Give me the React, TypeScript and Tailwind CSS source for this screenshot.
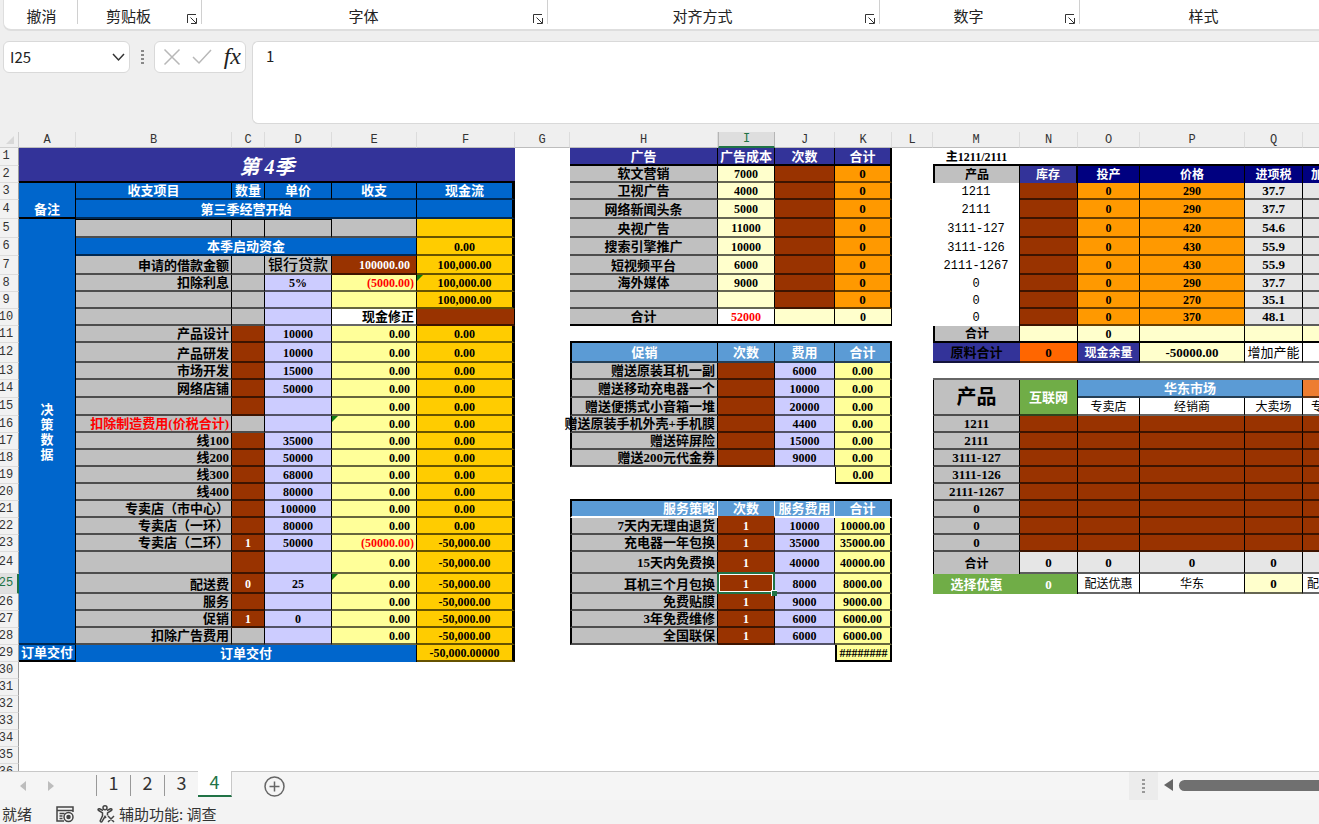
import React, { useState } from "react";

type Cell = {
  text?: string;
  cls: string;
  colSpan?: number;
  rowSpan?: number;
  flag?: boolean;
};

const COLUMNS = [
  { name: "A", width: 57 },
  { name: "B", width: 156 },
  { name: "C", width: 33 },
  { name: "D", width: 67 },
  { name: "E", width: 85 },
  { name: "F", width: 98 },
  { name: "G", width: 55 },
  { name: "H", width: 148 },
  { name: "I", width: 57 },
  { name: "J", width: 60 },
  { name: "K", width: 57 },
  { name: "L", width: 41 },
  { name: "M", width: 87 },
  { name: "N", width: 58 },
  { name: "O", width: 62 },
  { name: "P", width: 105 },
  { name: "Q", width: 58 },
  { name: "R", width: 58 },
];

// every row is 17px high except these
const ROW_HEIGHTS: Record<number, number> = {
  1: 18, 4: 19, 5: 19, 6: 18, 7: 19, 12: 20, 14: 18, 15: 18, 24: 22, 25: 20,
};
const ROW_COUNT = 36;

// borders
const G = "border-b-2 border-r border-b-black/60 border-r-black";
const GT = "border-b-2 border-r border-black";
const THICK_R = "border-b-2 border-r-3 border-b-black/60 border-r-black";
const END_R = "border-b-2 border-r-2 border-b-black/60 border-r-black";
const LEFT = "border-l-2 border-b-2 border-r border-b-black/60 border-x-black";

// text
const CN = "text-[13px] font-bold justify-center";
const CN_R = "text-[13px] font-bold justify-end pr-0.5";
const NUM = "text-[12px] font-bold justify-center";
const NUM_R = "text-[12px] font-bold justify-end pr-1.5";
const KAI = "text-[12px] justify-center";

// fills
const INDIGO = "bg-[#333399] text-white";
const NAVY = "bg-[#000080] text-white";
const BLUE = "bg-[#0066cc] text-white";
const SKY = "bg-[#5b9bd5] text-white";
const GRAY = "bg-[#c0c0c0]";
const LIGHT = "bg-[#e6e6e6]";
const BROWN = "bg-[#993300] text-white";
const LILAC = "bg-[#ccccff]";
const YELLOW = "bg-[#ffff99]";
const CREAM = "bg-[#ffffcc]";
const GOLD = "bg-[#ffcc00]";
const ORANGE = "bg-[#ff9900]";
const GREEN = "bg-[#70ad47] text-white";

const cells: Record<string, Cell> = {};

const put = (ref: string, text: string, cls: string, more: Partial<Cell> = {}) => {
  cells[ref] = { text, cls, ...more };
};

/* ---------- A:F, season cash table ---------- */
put("A1", "第 4季", `${INDIGO} border-b-2 border-black text-[20px] italic font-bold justify-center pt-1`, { colSpan: 6, rowSpan: 2 });
put("A3", "备注", `${BLUE} ${GT} ${CN} align-bottom`, { rowSpan: 2 });
put("B3", "收支项目", `${BLUE} ${G} ${CN}`);
put("C3", "数量", `${BLUE} ${G} ${CN}`);
put("D3", "单价", `${BLUE} ${G} ${CN}`);
put("E3", "收支", `${BLUE} ${G} ${CN}`);
put("F3", "现金流", `${BLUE} ${THICK_R} ${CN}`);
put("B4", "第三季经营开始", `${BLUE} ${G} ${CN} align-bottom`, { colSpan: 4 });
put("F4", "", `${BLUE} ${THICK_R}`);
put("A5", "决策数据", `${BLUE} ${G} ${CN} stack`, { rowSpan: 24 });
["B5", "C5", "D5"].forEach((ref) => put(ref, "", `${GRAY} border-t ${G} border-t-black`));
put("E5", "", `${GRAY} ${G}`);
put("F5", "", `${GOLD} ${THICK_R}`);
put("B6", "本季启动资金", `${BLUE} ${G} ${CN} align-bottom`, { colSpan: 4 });
put("F6", "0.00", `${GOLD} ${THICK_R} ${NUM}`);

type CashRow = [label: string, count: string | null, price: string, amount: string, cash: string];

// count === null means the count cell cannot be filled in
const cashRows: CashRow[] = [
  ["申请的借款金额", null, "银行贷款", "100000.00", "100,000.00"],
  ["扣除利息", null, "5%", "(5000.00)", "100,000.00"],
  ["", null, "", "", "100,000.00"],
  ["", null, "", "现金修正", ""],
  ["产品设计", "", "10000", "0.00", "0.00"],
  ["产品研发", "", "10000", "0.00", "0.00"],
  ["市场开发", "", "15000", "0.00", "0.00"],
  ["网络店铺", "", "50000", "0.00", "0.00"],
  ["", "", "", "0.00", "0.00"],
  ["扣除制造费用(价税合计)", null, "", "0.00", "0.00"],
  ["线100", "", "35000", "0.00", "0.00"],
  ["线200", "", "50000", "0.00", "0.00"],
  ["线300", "", "68000", "0.00", "0.00"],
  ["线400", "", "80000", "0.00", "0.00"],
  ["专卖店（市中心）", "", "100000", "0.00", "0.00"],
  ["专卖店（一环）", "", "80000", "0.00", "0.00"],
  ["专卖店（二环）", "1", "50000", "(50000.00)", "-50,000.00"],
  ["", "", "", "0.00", "-50,000.00"],
  ["配送费", "0", "25", "0.00", "-50,000.00"],
  ["服务", "", "", "0.00", "-50,000.00"],
  ["促销", "1", "0", "0.00", "-50,000.00"],
  ["扣除广告费用", null, "", "0.00", "-50,000.00"],
];

cashRows.forEach(([label, count, price, amount, cash], i) => {
  const r = i + 7;
  const negative = amount.startsWith("(");
  put(`B${r}`, label, `${GRAY} ${G} ${CN_R} align-bottom ${r === 16 ? "text-[#ff0000]" : ""}`);
  put(`C${r}`, count ?? "", `${count === null ? GRAY : BROWN} ${G} ${NUM}`);
  put(`D${r}`, price, `${LILAC} ${G} ${NUM}`);
  put(`E${r}`, amount, `${YELLOW} ${G} ${negative ? "text-[12px] font-bold justify-end pr-0.5 text-[#ff0000]" : NUM_R}`, { flag: r === 16 || r === 25 });
  put(`F${r}`, cash, `${GOLD} ${THICK_R} ${NUM}`, { flag: r === 8 });
});
put("D7", "银行贷款", `${GRAY} ${G} text-[15px] font-medium justify-center`);
put("E7", "100000.00", `${BROWN} ${G} ${NUM_R}`);
put("E10", "现金修正", `bg-white ${G} ${CN_R}`);
put("F10", "", `${BROWN} ${G}`);
put("A29", "订单交付", `${BLUE} ${GT} ${CN}`);
put("B29", "订单交付", `${BLUE} border-r border-black ${CN}`, { colSpan: 4 });
put("F29", "-50,000.00000", `${GOLD} ${THICK_R} ${NUM}`);

/* ---------- H:K, advertising ---------- */
put("H1", "广告", `${INDIGO} ${GT} ${CN}`);
put("I1", "广告成本", `${INDIGO} ${GT} ${CN}`);
put("J1", "次数", `${INDIGO} ${GT} ${CN}`);
put("K1", "合计", `${INDIGO} border-b-2 border-r-2 border-black ${CN}`);

[
  ["软文营销", "7000"],
  ["卫视广告", "4000"],
  ["网络新闻头条", "5000"],
  ["央视广告", "11000"],
  ["搜索引擎推广", "10000"],
  ["短视频平台", "6000"],
  ["海外媒体", "9000"],
  ["", ""],
].forEach(([label, cost], i) => {
  const r = i + 2;
  put(`H${r}`, label, `${GRAY} ${G} ${CN} align-bottom`);
  put(`I${r}`, cost, `${CREAM} ${G} ${NUM}`);
  put(`J${r}`, "", `${BROWN} ${G}`);
  put(`K${r}`, "0", `${ORANGE} ${END_R} text-[13px] font-bold justify-center`);
});
put("H10", "合计", `${GRAY} ${GT} ${CN}`);
put("I10", "52000", `bg-white text-[#ff0000] ${GT} ${NUM}`);
put("J10", "", `${CREAM} ${GT}`);
put("K10", "0", `${CREAM} ${GT} ${NUM}`);

/* ---------- H:K, promotion ---------- */
["H11", "I11", "J11", "K11", "H20", "I20", "J20", "K20"].forEach((ref) => put(ref, "", "border-b-2 border-black"));
put("H12", "促销", `${SKY} ${LEFT} ${CN}`);
put("I12", "次数", `${SKY} ${G} ${CN}`);
put("J12", "费用", `${SKY} ${G} ${CN}`);
put("K12", "合计", `${SKY} ${END_R} ${CN}`);

[
  ["赠送原装耳机一副", "6000"],
  ["赠送移动充电器一个", "10000"],
  ["赠送便携式小音箱一堆", "20000"],
  ["赠送原装手机外壳+手机膜", "4400"],
  ["赠送碎屏险", "15000"],
  ["赠送200元代金券", "9000"],
].forEach(([label, cost], i) => {
  const r = i + 13;
  put(`H${r}`, label, `${GRAY} ${LEFT} ${CN_R} align-bottom`);
  put(`I${r}`, "", `${BROWN} ${G}`);
  put(`J${r}`, cost, `${LILAC} ${G} ${NUM}`);
  put(`K${r}`, "0.00", `${YELLOW} ${END_R} ${NUM}`);
});
put("K19", "0.00", `${YELLOW} border-b-2 border-l border-r-2 border-black ${NUM}`);

/* ---------- H:K, service ---------- */
put("H21", "服务策略", `${SKY} border-l-2 border-l-black border-b-2 border-r border-b-white border-r-white ${CN_R}`);
put("I21", "次数", `${SKY} border-b-2 border-r border-b-[#993300] border-r-white ${CN}`);
put("J21", "服务费用", `${SKY} border-b-2 border-r border-white ${CN}`);
put("K21", "合计", `${SKY} border-b-2 border-r-2 border-b-white border-r-black ${CN}`);

[
  ["7天内无理由退货", "10000"],
  ["充电器一年包换", "35000"],
  ["15天内免费换", "40000"],
  ["耳机三个月包换", "8000"],
  ["免费贴膜", "9000"],
  ["3年免费维修", "6000"],
  ["全国联保", "6000"],
].forEach(([label, cost], i) => {
  const r = i + 22;
  put(`H${r}`, label, `${GRAY} ${LEFT} ${CN_R} ${r === 24 ? "" : "align-bottom"}`);
  put(`I${r}`, "1", `${BROWN} ${G} ${NUM}`);
  put(`J${r}`, cost, `${LILAC} ${G} ${NUM}`);
  put(`K${r}`, `${cost}.00`, `${YELLOW} ${END_R} ${NUM}`);
});
put("K29", "########", `${YELLOW} border-b-2 border-l-2 border-r-2 border-black ${NUM}`);

/* ---------- M:R, production ---------- */
put("M1", "主1211/2111", `border-b-2 border-black ${NUM}`);
["N1", "O1", "P1", "Q1", "R1"].forEach((ref) => put(ref, "", "border-b-2 border-black"));
put("M2", "产品", `${GRAY} border-l-2 border-r border-black ${KAI} font-bold`);
put("N2", "库存", `${INDIGO} border-r-2 border-black ${KAI} font-bold`);
put("O2", "投产", `${NAVY} border-r border-black ${KAI} font-bold`);
put("P2", "价格", `${NAVY} border-r border-black ${KAI} font-bold`);
put("Q2", "进项税", `${NAVY} border-r border-black ${KAI} font-bold`);
put("R2", "加", `${NAVY} text-[12px] font-bold justify-start pl-2`);

[
  ["1211", "290", "37.7"],
  ["2111", "290", "37.7"],
  ["3111-127", "420", "54.6"],
  ["3111-126", "430", "55.9"],
  ["2111-1267", "430", "55.9"],
  ["0", "290", "37.7"],
  ["0", "270", "35.1"],
  ["0", "370", "48.1"],
].forEach(([product, price, tax], i) => {
  const r = i + 3;
  put(`M${r}`, product, "border-r border-black font-['Liberation_Mono',monospace] text-[12px] justify-center");
  put(`N${r}`, "", `${BROWN} ${G}`);
  put(`O${r}`, "0", `${ORANGE} ${G} ${NUM}`);
  put(`P${r}`, price, `${ORANGE} ${G} ${NUM}`);
  put(`Q${r}`, tax, `${LIGHT} ${G} text-[13px] font-bold justify-center`);
  put(`R${r}`, "", `${LIGHT} ${G}`);

  // same products again in the market table below
  const m = i + 16;
  put(`M${m}`, product, `${GRAY} border-l ${G} border-l-black text-[13px] font-bold justify-center`);
  ["N", "O", "P", "Q", "R"].forEach((c) => put(`${c}${m}`, "", `${BROWN} ${G}`));
});
put("M11", "合计", `${GRAY} border-l-2 border-b-2 border-r border-black ${KAI} font-bold`);
["N11", "P11", "Q11", "R11"].forEach((ref) => put(ref, "", `${CREAM} ${GT}`));
put("O11", "0", `${CREAM} ${GT} ${NUM}`);
put("M12", "原料合计", "bg-[#333399] text-black border-b-2 border-b-black/60 text-[13px] font-bold justify-center");
put("N12", "0", `bg-[#ff6600] ${G} text-[13px] font-bold justify-center`);
put("O12", "现金余量", `${INDIGO} ${G} ${KAI} font-bold`);
put("P12", "-50000.00", `${CREAM} ${G} text-[13px] font-bold justify-center`);
put("Q12", "增加产能", `bg-white ${G} text-[13px] justify-center`);
put("R12", "", `bg-white ${G}`);

/* ---------- M:R, market ---------- */
["M13", "N13", "O13", "P13", "Q13", "R13"].forEach((ref) => put(ref, "", "border-b-2 border-b-black/60"));
put("M14", "产品", `${GRAY} border-l ${G} border-l-black text-[20px] font-bold justify-center`, { rowSpan: 2 });
put("N14", "互联网", `${GREEN} ${G} text-[13px] font-bold justify-center`, { rowSpan: 2 });
put("O14", "华东市场", `${SKY} ${G} ${CN}`, { colSpan: 3 });
put("R14", "", "bg-[#ed7d31] border-b-2 border-b-black/60");
put("O15", "专卖店", `bg-white ${G} ${KAI}`);
put("P15", "经销商", `bg-white ${G} ${KAI}`);
put("Q15", "大卖场", `bg-white ${G} ${KAI}`);
put("R15", "专", `bg-white ${G} text-[12px] justify-start pl-2`);
put("M24", "合计", `${GRAY} border-l border-r border-black ${KAI} font-bold`);
["N24", "O24", "P24", "Q24"].forEach((ref) => put(ref, "0", `${LIGHT} ${G} text-[13px] font-bold justify-center`));
put("R24", "", `${LIGHT} ${G}`);
put("M25", "选择优惠", `${GREEN} text-[13px] font-bold justify-center`);
put("N25", "0", `${GREEN} border-r border-black text-[13px] font-bold justify-center`);
put("O25", "配送优惠", `bg-white ${G} ${KAI}`);
put("P25", "华东", `bg-white ${G} ${KAI}`);
put("Q25", "0", `${CREAM} ${G} text-[13px] font-bold justify-center`);
put("R25", "配", `bg-white ${G} text-[12px] justify-start pl-1`);

// cells hidden under a merged one
const covered = new Set<string>();
Object.entries(cells).forEach(([ref, { colSpan = 1, rowSpan = 1 }]) => {
  const col = COLUMNS.findIndex((c) => c.name === ref[0]);
  const row = Number(ref.slice(1));
  for (let r = row; r < row + rowSpan; r++) {
    for (let c = col; c < col + colSpan; c++) {
      if (r !== row || c !== col) covered.add(`${COLUMNS[c].name}${r}`);
    }
  }
});

const pick = (cls: string, test: RegExp) => cls.split(" ").filter((c) => test.test(c)).join(" ");
const INNER = /^(justify-|pr-|pl-|pt-)/;
const OUTER = /^(?!justify-|pr-|pl-|pt-|stack$)/;

const SheetCell = ({ id, selected }: { id: string; selected: boolean }) => {
  const cell = cells[id];
  if (!cell) return <td />;

  const stacked = cell.cls.includes("stack");
  const large = cell.cls.includes("text-[20px]");
  const align = cell.cls.includes("align-bottom") ? "" : "align-middle";

  return (
    <td
      colSpan={cell.colSpan}
      rowSpan={cell.rowSpan}
      className={`relative p-0 ${align} ${pick(cell.cls, OUTER)}`}
    >
      {cell.text && (
        <div
          className={`flex whitespace-nowrap ${large ? "leading-6" : "pt-px leading-[14px]"} ${pick(cell.cls, INNER)}`}
        >
          {stacked ? (
            <span className="w-[13px] whitespace-normal break-all leading-[15px]">{cell.text}</span>
          ) : (
            <span className="whitespace-pre">{cell.text}</span>
          )}
        </div>
      )}
      {cell.flag && (
        <span className="absolute left-0 top-0 size-0 border-t-[6px] border-r-[6px] border-t-[#107c10] border-r-transparent" />
      )}
      {selected && (
        <span className="absolute -inset-x-px -top-0.5 -bottom-0.5 z-10 border-2 border-[#217346]">
          <span className="block size-full border border-white" />
          <span className="absolute -right-1 -bottom-1 size-[6px] border-l border-t border-white bg-[#217346]" />
        </span>
      )}
    </td>
  );
};

const Launcher = () => (
  <button aria-label="更多设置" className="absolute right-0.5 top-3 p-px">
    <svg viewBox="0 0 12 12" className="size-3 fill-none stroke-[#333]">
      <path d="M1.5 10V1.5H10M4.5 4.5L10 10M10.5 5V10.5H5" />
    </svg>
  </button>
);

const Ribbon = () => {
  const groups = [
    { name: "撤消", width: "w-[74px]", launcher: false },
    { name: "剪贴板", width: "w-[124px]", launcher: true },
    { name: "字体", width: "w-[346px]", launcher: true },
    { name: "对齐方式", width: "w-[332px]", launcher: true },
    { name: "数字", width: "w-[200px]", launcher: true },
    { name: "样式", width: "w-[246px]", launcher: false },
  ];

  return (
    <div className="ml-[3px] flex h-[31px] shrink-0 overflow-hidden rounded-bl-lg border-b-2 border-l border-[#dedede] bg-white">
      {groups.map((g) => (
        <div
          key={g.name}
          className={`relative h-6 shrink-0 border-r border-[#d0d0d0] pt-[5px] pl-0.5 text-center text-[15px] leading-[22px] ${g.width} ${g.launcher ? "pr-6" : ""}`}
        >
          {g.name}
          {g.launcher && <Launcher />}
        </div>
      ))}
    </div>
  );
};

const FormulaBar = () => {
  const [name, setName] = useState("I25");
  const [value, setValue] = useState("1");

  return (
    <div className="flex h-[93px] shrink-0 pl-[3px] pt-2.5">
      <div className="flex h-8 w-[127px] items-center rounded-md border border-[#d9d9d9] bg-white pl-1.5 pr-1">
        <input
          aria-label="名称框"
          value={name}
          onChange={(e) => setName(e.target.value)}
          className="w-full min-w-0 flex-1 text-[15px] outline-none"
        />
        <button aria-label="展开名称框">
          <svg viewBox="0 0 14 14" className="size-3.5 fill-none stroke-[#333] stroke-[1.5]">
            <path d="M2 4l5.500 6L13 4" />
          </svg>
        </button>
      </div>

      <svg viewBox="0 0 4 16" className="mx-2.5 mt-2 h-4 w-1 fill-[#888]">
        <path d="M1 1h3v2H1zM1 5h3v2H1zM1 9h3v2H1zM1 13h3v2H1z" />
      </svg>

      <div className="mr-1.5 flex h-8 w-[92px] items-center justify-between rounded-md border border-[#d9d9d9] bg-white pl-2 pr-1">
        <button aria-label="取消">
          <svg viewBox="0 0 18 18" className="size-[18px] fill-none stroke-[#b8b8b8] stroke-[1.5]">
            <path d="M1.500 1.500l15 15M16.500 1.500l-15 15" />
          </svg>
        </button>
        <button aria-label="输入">
          <svg viewBox="0 0 20 18" className="h-[18px] w-5 fill-none stroke-[#b8b8b8] stroke-[1.5]">
            <path d="M1 9l6 6L19 2" />
          </svg>
        </button>
        <button
          aria-label="插入函数"
          className="pb-0.5 font-['Liberation_Serif',serif] text-[24px] italic leading-6 text-[#222]"
        >
          fx
        </button>
      </div>

      <textarea
        aria-label="编辑栏"
        value={value}
        onChange={(e) => setValue(e.target.value)}
        className="h-[83px] min-w-0 flex-1 resize-none rounded-l-md border border-r-0 border-[#d9d9d9] bg-white px-[13px] pt-[3px] text-[15px] leading-[22px] outline-none"
      />
    </div>
  );
};

const Sheet = () => {
  const rows = Array.from({ length: ROW_COUNT }, (_, i) => i + 1);

  return (
    <div className="min-h-0 flex-1 overflow-hidden bg-white">
      <table className="w-[1361px] table-fixed border-separate border-spacing-0 font-['Liberation_Serif','Noto_Sans_CJK_SC',serif] text-black">
        <colgroup>
          <col style={{ width: 19 }} />
          {COLUMNS.map((c) => (
            <col key={c.name} style={{ width: c.width }} />
          ))}
        </colgroup>
        <thead className="font-['Liberation_Mono',monospace] text-[12px] leading-[13px] text-[#333]">
          <tr className="h-4">
            <th className="border-b border-r border-[#d0d0d0] bg-[#efefef] p-0">
              <svg viewBox="0 0 8 8" className="ml-1.5 size-2 fill-[#d8d8d8]">
                <path d="M8 0v8H0z" />
              </svg>
            </th>
            {COLUMNS.map((c) => (
              <th
                key={c.name}
                scope="col"
                className={
                  c.name === "I"
                    ? "border-b-2 border-x border-x-[#b5b5b5] border-b-[#217346] bg-[#dedede] p-0 align-bottom font-normal text-[#217346]"
                    : "border-b border-r border-b-[#bdbdbd] border-r-[#dcdcdc] bg-[#efefef] p-0 pt-0.5 align-bottom font-normal"
                }
              >
                {c.name}
              </th>
            ))}
          </tr>
        </thead>
        <tbody>
          {rows.map((r) => (
            <tr key={r} style={{ height: ROW_HEIGHTS[r] ?? 17 }}>
              <th
                scope="row"
                className={`border-b border-b-[#dcdcdc] py-0 pl-0 text-center align-middle font-['Liberation_Mono',monospace] text-[12px] font-normal leading-[15px] ${
                  r === 25
                    ? "border-r-2 border-r-[#217346] bg-[#e0e0e0] pr-[5px] text-[#217346]"
                    : "border-r border-r-[#9c9c9c] bg-[#f2f2f2] pr-1.5 text-[#333]"
                }`}
              >
                <div className="flex justify-center whitespace-nowrap">{r}</div>
              </th>
              {COLUMNS.filter((c) => !covered.has(`${c.name}${r}`)).map((c) => (
                <SheetCell key={c.name} id={`${c.name}${r}`} selected={c.name === "I" && r === 25} />
              ))}
            </tr>
          ))}
        </tbody>
      </table>
    </div>
  );
};

const SheetTabs = () => {
  const [active, setActive] = useState("4");

  return (
    <div className="flex h-[29px] shrink-0 border-t border-[#c8c8c8] bg-[#f5f5f5]">
      <div className="flex w-24 items-center gap-[22px] pl-5">
        <button aria-label="上一个工作表">
          <svg viewBox="0 0 6 10" className="h-2.5 w-1.5 fill-[#bdbdbd]">
            <path d="M6 0v10L0 5z" />
          </svg>
        </button>
        <button aria-label="下一个工作表">
          <svg viewBox="0 0 6 10" className="h-2.5 w-1.5 fill-[#bdbdbd]">
            <path d="M0 0v10l6-5z" />
          </svg>
        </button>
      </div>
      {["1", "2", "3", "4"].map((t) => (
        <button
          key={t}
          onClick={() => setActive(t)}
          className={
            t === active
              ? "-mt-px h-[26px] w-[34px] border-b-2 border-r border-b-[#217346] border-r-[#c8c8c8] bg-white pb-1 text-[18px] leading-5 text-[#217346]"
              : "mt-[3px] h-[21px] w-[34px] border-l border-[#999] pb-1.5 text-[18px] leading-[15px] text-[#333]"
          }
        >
          {t}
        </button>
      ))}
      <button aria-label="新工作表" className="ml-8 self-center">
        <svg viewBox="0 0 21 21" className="size-[21px] fill-none stroke-[#666] stroke-[1.5]">
          <circle cx="10.500" cy="10.500" r="9.500" />
          <path d="M10.500 5.500v10M5.500 10.500h10" />
        </svg>
      </button>
      <div className="flex-1" />
      <div className="flex w-[29px] items-center justify-center bg-[#ececec]">
        <svg viewBox="0 0 3 14" className="h-3.5 w-[3px] fill-[#999]">
          <path d="M0 0h3v2H0zM0 4h3v2H0zM0 8h3v2H0zM0 12h3v2H0z" />
        </svg>
      </div>
      <div className="flex w-[161px] items-center gap-1.5 pb-0.5 pl-1.5">
        <button aria-label="向左滚动">
          <svg viewBox="0 0 9 12" className="h-3 w-[9px] fill-[#666]">
            <path d="M9 0v12L0 6z" />
          </svg>
        </button>
        <div className="h-[11px] flex-1 rounded-l-full bg-[#707070]" />
      </div>
    </div>
  );
};

const StatusBar = () => (
  <div className="flex h-6 shrink-0 items-center bg-[#f3f3f3] pl-0.5 pt-1 text-[15px] leading-5 text-[#333]">
    <span>就绪</span>
    <svg viewBox="0 0 19 17" className="ml-6 h-[17px] w-[19px] fill-none stroke-[#444] stroke-[1.5]">
      <path d="M8 15H1V1h16v5M1 4.500h16M3.500 7.500h5M3.500 10h3M3.500 12.500h3" />
      <circle cx="12.500" cy="11" r="4.500" />
      <circle cx="12.500" cy="11" r="1.500" className="fill-[#444]" />
    </svg>
    <button className="ml-[22px] flex items-center gap-1">
      <svg viewBox="0 0 18 18" className="size-[18px] fill-none stroke-[#444] stroke-[1.5]">
        <circle cx="8" cy="2.800" r="2" />
        <path d="M6 5.500L2.500 3.800c-1.200-.5-2 1-.8 1.700L5.500 7.800v3L3.300 15.500c-.5 1.300 1.200 2 1.800.8L8 11.500l1 1.500M10 5.500l3.500-1.700c1.200-.5 2 1 .8 1.700L10.500 7.800v2.700M11 11l6 6M17 11l-6 6" />
      </svg>
      辅助功能: 调查
    </button>
  </div>
);

const App = () => {
  return (
    <div className="flex h-screen flex-col overflow-hidden bg-[#efefef] font-['Noto_Sans_CJK_SC',sans-serif] text-[#222]">
      <Ribbon />
      <FormulaBar />
      <div className="h-2 shrink-0" />
      <Sheet />
      <SheetTabs />
      <StatusBar />
    </div>
  );
};

export default App;
